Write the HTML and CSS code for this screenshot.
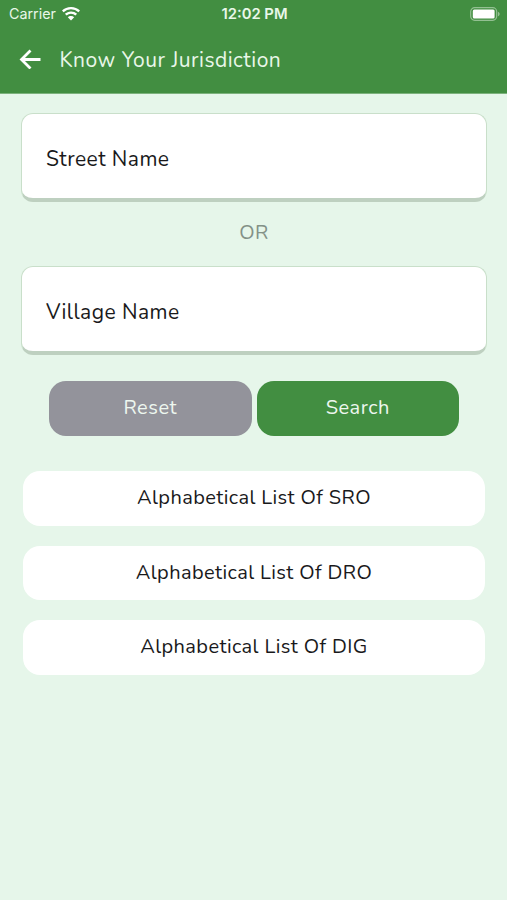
FILE: index.html
```html
<!DOCTYPE html>
<html lang="en">
  <head>
    <meta charset="utf-8" />
    <meta name="viewport" content="width=device-width, initial-scale=1.0" />
    <link rel="stylesheet" href="styles.css">
    <title>Know Your Jurisdiction</title>
  </head>

  <body>
    <header>
      <div class="status">
        <div class="carrier">
          <span>Carrier</span>
          <svg viewBox="0 0 18 14" width="18" height="14">
            <path d="M9 0C5.500 0 2.300 1.300 0 3.600L1.600 5.300A10.500 10.500 0 0 1 16.400 5.300L18 3.600A12.900 12.900 0 0 0 9 0Z" />
            <path d="M9 4.400C6.600 4.400 4.500 5.300 2.900 6.800L4.600 8.500A6.300 6.300 0 0 1 13.400 8.500L15.100 6.800A8.800 8.800 0 0 0 9 4.400Z" />
            <path d="M9 8.900C7.700 8.900 6.600 9.400 5.800 10.200L9 13.600L12.200 10.200A4.600 4.600 0 0 0 9 8.900Z" />
          </svg>
        </div>
        <span class="time">12:02 PM</span>
        <svg class="battery" viewBox="0 0 31 14" width="31" height="14">
          <rect class="shell" x="1.700" y="0.700" width="26" height="12.600" rx="4" />
          <rect x="3.800" y="2.600" width="21.800" height="8.800" rx="1.500" />
          <path class="cap" d="M29 4.700C31.200 5.500 31.200 8.500 29 9.300Z" />
        </svg>
      </div>
      <div class="navbar">
        <svg class="back" viewBox="0 0 22 20" width="22" height="20">
          <path d="M21.500 10.500H2.500M11.500 1.500L2.500 10.500L11.500 19.500" />
        </svg>
        <h1>Know Your Jurisdiction</h1>
      </div>
    </header>
    <main>
      <div class="field street">Street Name</div>
      <div class="or">OR</div>
      <div class="field village">Village Name</div>
      <div class="buttons">
        <button class="reset">Reset</button>
        <button class="search">Search</button>
      </div>
      <div class="lists">
        <a>Alphabetical List Of SRO</a>
        <a>Alphabetical List Of DRO</a>
        <a>Alphabetical List Of DIG</a>
      </div>
    </main>
  </body>
</html>
```

FILE: styles.css
```css
* {
  box-sizing: border-box;
}

body {
  margin: 0;
  min-height: 900px;
  background: #e6f6ea;
  color: #19191b;
  font-family: Nunito, "Open Sans", sans-serif;
  font-size: 20px;
  letter-spacing: 0.4px;
}

header {
  height: 94px;
  background: #428e41;
  border-bottom: 1px solid #7cb27c;
  color: #e9f7e9;
}

.status {
  display: grid;
  grid-template-columns: 1fr auto 1fr;
  align-items: center;
  height: 27px;
  padding: 0 7px 0 9px;
  font-family: Inter, sans-serif;
  font-size: 14.3px;
  letter-spacing: 0;
}

.status svg {
  fill: #fff;
}

.carrier {
  display: flex;
  align-items: center;
  gap: 6px;
}

.time {
  font-size: 14.8px;
  font-weight: 600;
}

.battery {
  justify-self: end;
}

.status .shell {
  fill: none;
  stroke: #93c092;
  stroke-width: 1.2;
}

.status .cap {
  fill: #93c092;
}

.navbar {
  display: flex;
  align-items: center;
  height: 64px;
  padding-left: 19px;
}

.back {
  fill: none;
  stroke: #fff;
  stroke-width: 2.8;
}

h1 {
  margin: 0 0 0 18.5px;
  padding-top: 2px;
  font-size: 21px;
  font-weight: 400;
  letter-spacing: 0.5px;
}

main {
  padding: 19px 20px 0 21px;
}

.field {
  display: flex;
  align-items: center;
  height: 89px;
  padding: 5px 24px 0;
  background: #fff;
  border: 1px solid #c9dfca;
  border-bottom: 4px solid #bed0c0;
  border-radius: 12px;
  font-size: 21px;
  letter-spacing: 0.45px;
}

.or {
  height: 64px;
  line-height: 62px;
  text-align: center;
  color: #839187;
  font-size: 20px;
}

.buttons {
  display: flex;
  gap: 5px;
  margin: 25.5px 28px 0;
}

button {
  flex: 1;
  height: 55px;
  padding: 0 0 1px;
  border: 0;
  border-radius: 17px;
  color: #edf7ef;
  font: inherit;
  letter-spacing: 0.5px;
}

.reset {
  background: #93939b;
}

.search {
  background: #428e41;
}

.lists {
  display: grid;
  gap: 20px;
  margin: 35.5px 2px 0;
}

.lists a {
  height: 54.5px;
  line-height: 54px;
  background: #fff;
  border-radius: 17px;
  text-align: center;
}
```
